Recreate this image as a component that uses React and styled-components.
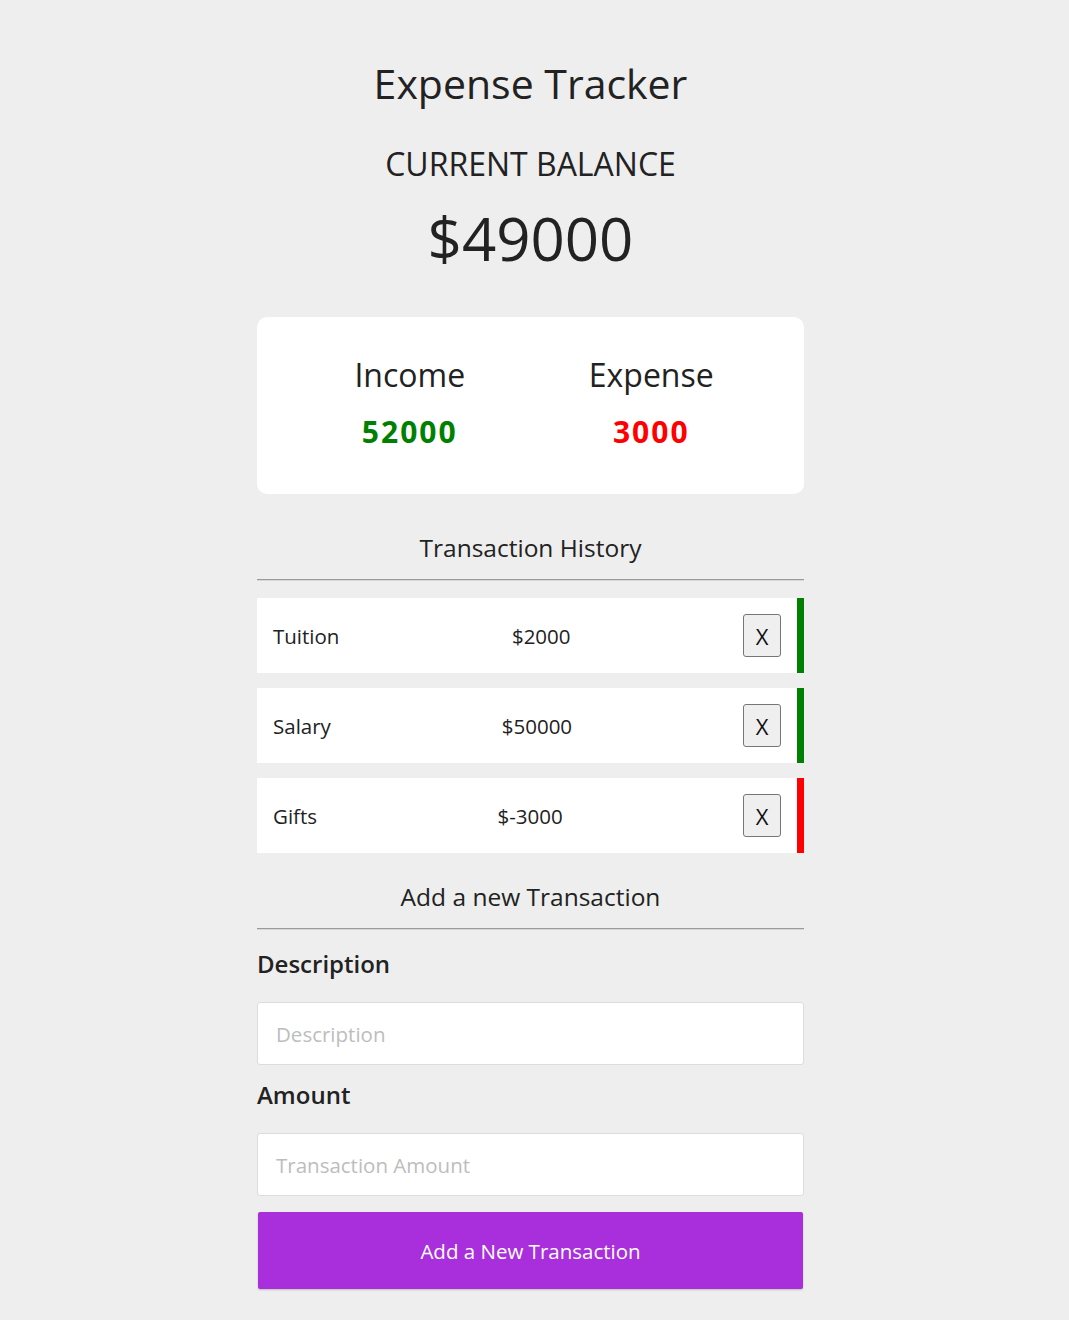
import React from 'react';
import styled, { createGlobalStyle } from 'styled-components';

const GlobalStyle = createGlobalStyle`
  body {
    margin: 0;
    background: #eeeeee;
    font-family: "Open Sans", "Noto Sans", sans-serif;
    color: #222;
  }
`;

const transactions = [
  { id: 1, text: 'Tuition', amount: 2000 },
  { id: 2, text: 'Salary', amount: 50000 },
  { id: 3, text: 'Gifts', amount: -3000 },
];

const App = () => {
  const income = 52000;
  const expense = 3000;

  return (
    <Page>
      <GlobalStyle />
      <Container>
        <Title>Expense Tracker</Title>
        <BalanceLabel>CURRENT BALANCE</BalanceLabel>
        <Balance>$49000</Balance>

        <SummaryCard>
          <SummaryCol>
            <SummaryLabel>Income</SummaryLabel>
            <SummaryValue $color="#008000">{income}</SummaryValue>
          </SummaryCol>
          <SummaryCol>
            <SummaryLabel>Expense</SummaryLabel>
            <SummaryValue $color="#ff0000">{expense}</SummaryValue>
          </SummaryCol>
        </SummaryCard>

        <SectionTitle $top={38}>Transaction History</SectionTitle>
        <Divider />
        <List>
          {transactions.map((t) => (
            <Row key={t.id} $positive={t.amount > 0}>
              <span>{t.text}</span>
              <span>${t.amount}</span>
              <DeleteBtn>X</DeleteBtn>
            </Row>
          ))}
        </List>

        <SectionTitle $top={28}>Add a new Transaction</SectionTitle>
        <Divider />
        <Form onSubmit={(e) => e.preventDefault()}>
          <FieldLabel>Description</FieldLabel>
          <Input type="text" placeholder="Description" />
          <FieldLabel>Amount</FieldLabel>
          <Input type="number" placeholder="Transaction Amount" />
          <SubmitBtn type="submit">Add a New Transaction</SubmitBtn>
        </Form>
      </Container>
    </Page>
  );
};

export default App;

const Page = styled.div`
  padding: 0 8px 30px 0;
`;

const Container = styled.div`
  width: 547px;
  margin: 0 auto;
  display: flex;
  flex-direction: column;
`;

const Title = styled.h1`
  margin: 59px 0 0;
  font-size: 41px;
  line-height: 48px;
  font-weight: 500;
  text-align: center;
`;

const BalanceLabel = styled.h3`
  margin: 39px 0 0;
  font-size: 32px;
  line-height: 36px;
  font-weight: 500;
  text-align: center;
`;

const Balance = styled.h1`
  margin: 20px 0 0;
  font-size: 60px;
  line-height: 72px;
  font-weight: 500;
  text-align: center;
`;

const SummaryCard = styled.div`
  margin-top: 43px;
  height: 177px;
  box-sizing: border-box;
  padding: 36px 32px 0;
  background: #fff;
  border-radius: 10px;
  display: flex;
`;

const SummaryCol = styled.div`
  flex: 1;
  display: flex;
  flex-direction: column;
  align-items: center;
`;

const SummaryLabel = styled.h4`
  margin: 0;
  font-size: 32px;
  line-height: 44px;
  font-weight: 500;
`;

const SummaryValue = styled.p`
  margin: 15px 0 0;
  font-size: 30px;
  line-height: 40px;
  font-weight: 700;
  letter-spacing: 2px;
  color: ${(p) => p.$color};
`;

const SectionTitle = styled.h3`
  margin: ${(p) => p.$top}px 0 0;
  font-size: 24.5px;
  line-height: 32px;
  font-weight: 500;
  text-align: center;
`;

const Divider = styled.hr`
  margin: 15px 0 0;
  border: 0;
  border-top: 1px solid #9a9a9a;
  border-bottom: 1px solid #d8d8d8;
`;

const List = styled.ul`
  list-style: none;
  margin: 17px 0 0;
  padding: 0;
  display: flex;
  flex-direction: column;
  gap: 15px;
`;

const Row = styled.li`
  height: 75px;
  box-sizing: border-box;
  padding: 0 16px;
  background: #fff;
  border-right: 7px solid ${(p) => (p.$positive ? '#008000' : '#ff0000')};
  display: flex;
  align-items: center;
  justify-content: space-between;
  font-size: 20.5px;
`;

const DeleteBtn = styled.button`
  width: 38px;
  height: 43px;
  padding: 0;
  font-family: "Open Sans", sans-serif;
  font-size: 22px;
  color: #111;
  background: #efefef;
  border: 1px solid #767676;
  border-radius: 3px;
  cursor: pointer;
`;

const Form = styled.form`
  display: flex;
  flex-direction: column;
  padding-top: 4px;
`;

const FieldLabel = styled.label`
  margin-top: 14px;
  font-size: 24px;
  line-height: 32px;
  font-weight: 600;
`;

const Input = styled.input`
  margin-top: 22px;
  height: 63px;
  box-sizing: border-box;
  padding: 0 18px;
  background: #fff;
  border: 1px solid #dcdcdc;
  border-radius: 3px;
  font-family: "Open Sans", sans-serif;
  font-size: 20.5px;
  outline: none;
  &::placeholder {
    color: #bdbdbd;
  }
  -moz-appearance: textfield;
  &::-webkit-outer-spin-button,
  &::-webkit-inner-spin-button {
    -webkit-appearance: none;
  }
`;

const SubmitBtn = styled.button`
  margin: 16px 1px 0;
  height: 77px;
  background: #a82fdb;
  color: #fff;
  border: 0;
  border-radius: 2px;
  box-shadow: 0 1px 2px rgba(0, 0, 0, 0.2);
  font-family: "Open Sans", sans-serif;
  font-size: 20.5px;
  cursor: pointer;
`;
